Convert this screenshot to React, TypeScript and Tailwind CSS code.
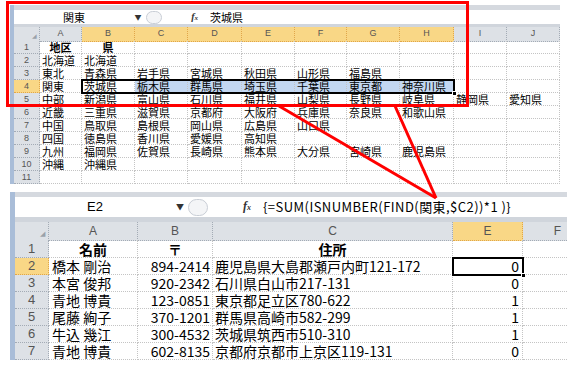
import React from 'react';

const jp = { fontFamily: '"Noto Sans CJK JP", "Noto Sans", sans-serif' };
const hdr = { fontFamily: '"Liberation Sans", Arial, sans-serif' };

const topLetters = ['A', 'B', 'C', 'D', 'E', 'F', 'G', 'H', 'I', 'J'];
const topRows: string[][] = [
  ['地区', '県'],
  ['北海道', '北海道'],
  ['東北', '青森県', '岩手県', '宮城県', '秋田県', '山形県', '福島県'],
  ['関東', '茨城県', '栃木県', '群馬県', '埼玉県', '千葉県', '東京都', '神奈川県'],
  ['中部', '新潟県', '富山県', '石川県', '福井県', '山梨県', '長野県', '岐阜県', '静岡県', '愛知県'],
  ['近畿', '三重県', '滋賀県', '京都府', '大阪府', '兵庫県', '奈良県', '和歌山県'],
  ['中国', '鳥取県', '島根県', '岡山県', '広島県', '山口県'],
  ['四国', '徳島県', '香川県', '愛媛県', '高知県'],
  ['九州', '福岡県', '佐賀県', '長崎県', '熊本県', '大分県', '宮崎県', '鹿児島県'],
  ['沖縄', '沖縄県'],
  [],
];

const people = [
  ['橋本 剛治', '894-2414', '鹿児島県大島郡瀬戸内町121-172', '0'],
  ['本宮 俊邦', '920-2342', '石川県白山市217-131', '0'],
  ['青地 博貴', '123-0851', '東京都足立区780-622', '1'],
  ['尾藤 絢子', '370-1201', '群馬県高崎市582-299', '1'],
  ['牛込 幾江', '300-4532', '茨城県筑西市510-310', '1'],
  ['青地 博貴', '602-8135', '京都府京都市上京区119-131', '0'],
];

function FxMark({ small }: { small?: boolean }) {
  return (
    <span
      className={`font-bold italic text-[#333] ${small ? 'text-[10px]' : 'text-[12px]'}`}
      style={{ fontFamily: '"Liberation Serif", serif' }}
    >
      f<span className={small ? 'text-[7px]' : 'text-[8px]'}>x</span>
    </span>
  );
}

function TopSheet() {
  return (
    <div className="ml-[10px] mt-[5px] w-[550px] flex">
      <div className="w-[4px] bg-[#a9bdd8]" />
      <div className="flex-1 flex flex-col">
        <div className="h-[5px] bg-[#d5d9df]" />
        {/* formula bar */}
        <div className="h-[14px] flex items-center bg-white text-[11px] leading-[14px]" style={jp}>
          <div className="w-[120px] text-center">関東</div>
          <div className="w-[8px] text-[7px] text-[#333] text-center">▼</div>
          <div className="ml-[4px] w-[16px] h-[13px] rounded-full border border-[#c9ced6] bg-[#f4f5f7]" />
          <div className="w-[42px] flex justify-end pr-[6px]">
            <FxMark small />
          </div>
          <div className="pl-[6px]">茨城県</div>
        </div>
        <div className="h-[3px] bg-[#d0d5dc]" />
        <div className="relative">
          <div className="grid grid-cols-[26px_42px_53px_53px_54px_53px_52px_53px_54px_53px_53px] h-[14px] text-[9px] text-[#555]" style={hdr}>
            <div className="bg-[#dde1e6] border-r border-b border-dotted border-[#a3abb5] flex items-end justify-end pr-[2px] text-[6px] text-[#9aa1aa]">◢</div>
            {topLetters.map((l, i) => (
              <div
                key={l}
                className={`border-r border-b border-dotted flex items-center justify-center ${
                  i >= 1 && i <= 7 ? 'bg-[#f9d786] border-[#e0a64a]' : 'bg-[#dde1e6] border-[#a3abb5]'
                }`}
              >
                {l}
              </div>
            ))}
          </div>
          {topRows.map((row, r) => (
            <div
              key={r}
              className="grid grid-cols-[26px_42px_53px_53px_54px_53px_52px_53px_54px_53px_53px] h-[13px] text-[11px] leading-[12px]"
              style={jp}
            >
              <div
                className={`border-r border-b border-dotted flex items-end justify-center text-[9px] text-[#555] ${
                  r === 3 ? 'bg-[#f9d786] border-[#e0a64a]' : 'bg-[#dde1e6] border-[#a3abb5]'
                }`}
                style={hdr}
              >
                {r + 1}
              </div>
              {topLetters.map((l, c) => (
                <div
                  key={l}
                  className={`border-r border-b border-dotted border-[#c4c4c4] px-[2px] flex items-end whitespace-nowrap overflow-visible ${
                    r === 0 ? 'justify-center font-bold' : ''
                  } ${r === 3 && c >= 2 && c <= 7 ? 'bg-[#c3d7f1]' : ''}`}
                >
                  {row[c] ?? ''}
                </div>
              ))}
            </div>
          ))}
          {/* selection B4:H4 */}
          <div className="absolute left-[67px] top-[52px] w-[374px] h-[15px] border-2 border-black">
            <div className="absolute -right-[4px] -bottom-[4px] w-[5px] h-[5px] bg-black border border-white" />
          </div>
        </div>
      </div>
    </div>
  );
}

function BottomSheet() {
  return (
    <div className="ml-[10px] mt-[8px] flex">
      <div className="w-[5px] bg-[#a9bdd8]" />
      <div className="flex-1 flex flex-col overflow-hidden">
        <div className="h-[5px] bg-[#d5d9df]" />
        {/* formula bar */}
        <div className="h-[20px] flex items-center bg-white text-[13px] leading-[20px] whitespace-nowrap" style={jp}>
          <div className="w-[160px] text-center" style={hdr}>E2</div>
          <div className="w-[10px] text-[8px] text-[#333] text-center">▼</div>
          <div className="ml-[3px] w-[20px] h-[17px] rounded-full border border-[#c9ced6] bg-[#f4f5f7]" />
          <div className="w-[46px] flex justify-end pr-[3px]">
            <FxMark />
          </div>
          <div className="pl-[9px] tracking-[0.45px]">{'{=SUM(ISNUMBER(FIND(関東,$C2))*1 )}'}</div>
        </div>
        <div className="h-[5px] bg-[#d0d5dc]" />
        <div className="relative">
          <div className="grid grid-cols-[34px_89px_75px_240px_70px_70px] h-[18px] text-[12px] text-[#555]" style={hdr}>
            <div className="bg-[#dde1e6] border-r border-b border-dotted border-[#a3abb5] flex items-end justify-end pr-[3px] pb-[1px] text-[7px] text-[#9aa1aa]">◢</div>
            {['A', 'B', 'C', 'E', 'F'].map((l) => (
              <div
                key={l}
                className={`border-r border-b border-dotted flex items-center justify-center ${
                  l === 'E' ? 'bg-[#f9d786] border-[#e0a64a]' : 'bg-[#dde1e6] border-[#a3abb5]'
                }`}
              >
                {l}
              </div>
            ))}
          </div>
          <div className="grid grid-cols-[34px_89px_75px_240px_70px_70px] h-[18px] text-[14px] leading-[16px] font-bold" style={jp}>
            <div className="bg-[#dde1e6] border-r border-b border-dotted border-[#a3abb5] flex items-end justify-center text-[13px] font-normal text-[#555]" style={hdr}>1</div>
            <div className="border-r border-b border-dotted border-[#c4c4c4] flex items-end justify-center">名前</div>
            <div className="border-r border-b border-dotted border-[#c4c4c4] flex items-end justify-center">〒</div>
            <div className="border-r border-b border-dotted border-[#c4c4c4] flex items-end justify-center">住所</div>
            <div className="border-r border-b border-dotted border-[#c4c4c4]" />
            <div className="border-r border-b border-dotted border-[#c4c4c4]" />
          </div>
          {people.map((p, i) => (
            <div
              key={i}
              className="grid grid-cols-[34px_89px_75px_240px_70px_70px] h-[17px] text-[14px] leading-[16px] whitespace-nowrap"
              style={jp}
            >
              <div
                className={`border-r border-b border-dotted flex items-end justify-center text-[13px] text-[#555] ${
                  i === 0 ? 'bg-[#f9d786] border-[#e0a64a]' : 'bg-[#dde1e6] border-[#a3abb5]'
                }`}
                style={hdr}
              >
                {i + 2}
              </div>
              <div className="border-r border-b border-dotted border-[#c4c4c4] pl-[3px] flex items-end">{p[0]}</div>
              <div className="border-r border-b border-dotted border-[#c4c4c4] pr-[2px] flex items-end justify-end">{p[1]}</div>
              <div className="border-r border-b border-dotted border-[#c4c4c4] pl-[2px] flex items-end">{p[2]}</div>
              <div className="border-r border-b border-dotted border-[#c4c4c4] pr-[3px] flex items-end justify-end">{p[3]}</div>
              <div className="border-r border-b border-dotted border-[#c4c4c4]" />
            </div>
          ))}
          {/* selected E2 */}
          <div className="absolute left-[437px] top-[35px] w-[72px] h-[19px] border-2 border-black">
            <div className="absolute -right-[4px] -bottom-[4px] w-[5px] h-[5px] bg-black border border-white" />
          </div>
        </div>
      </div>
    </div>
  );
}

export default function App() {
  return (
    <div className="relative w-[567px] h-[369px] bg-white overflow-hidden">
      <TopSheet />
      <BottomSheet />
      <svg className="absolute inset-0 pointer-events-none" width={567} height={369} viewBox="0 0 567 369">
        <rect x={7.5} y={2.5} width={460} height={103} fill="none" stroke="#ff0000" strokeWidth={3} />
        <line x1={279} y1={106} x2={436} y2={198} stroke="#ff0000" strokeWidth={3} />
        <line x1={395} y1={106} x2={436} y2={198} stroke="#ff0000" strokeWidth={3} />
      </svg>
    </div>
  );
}
